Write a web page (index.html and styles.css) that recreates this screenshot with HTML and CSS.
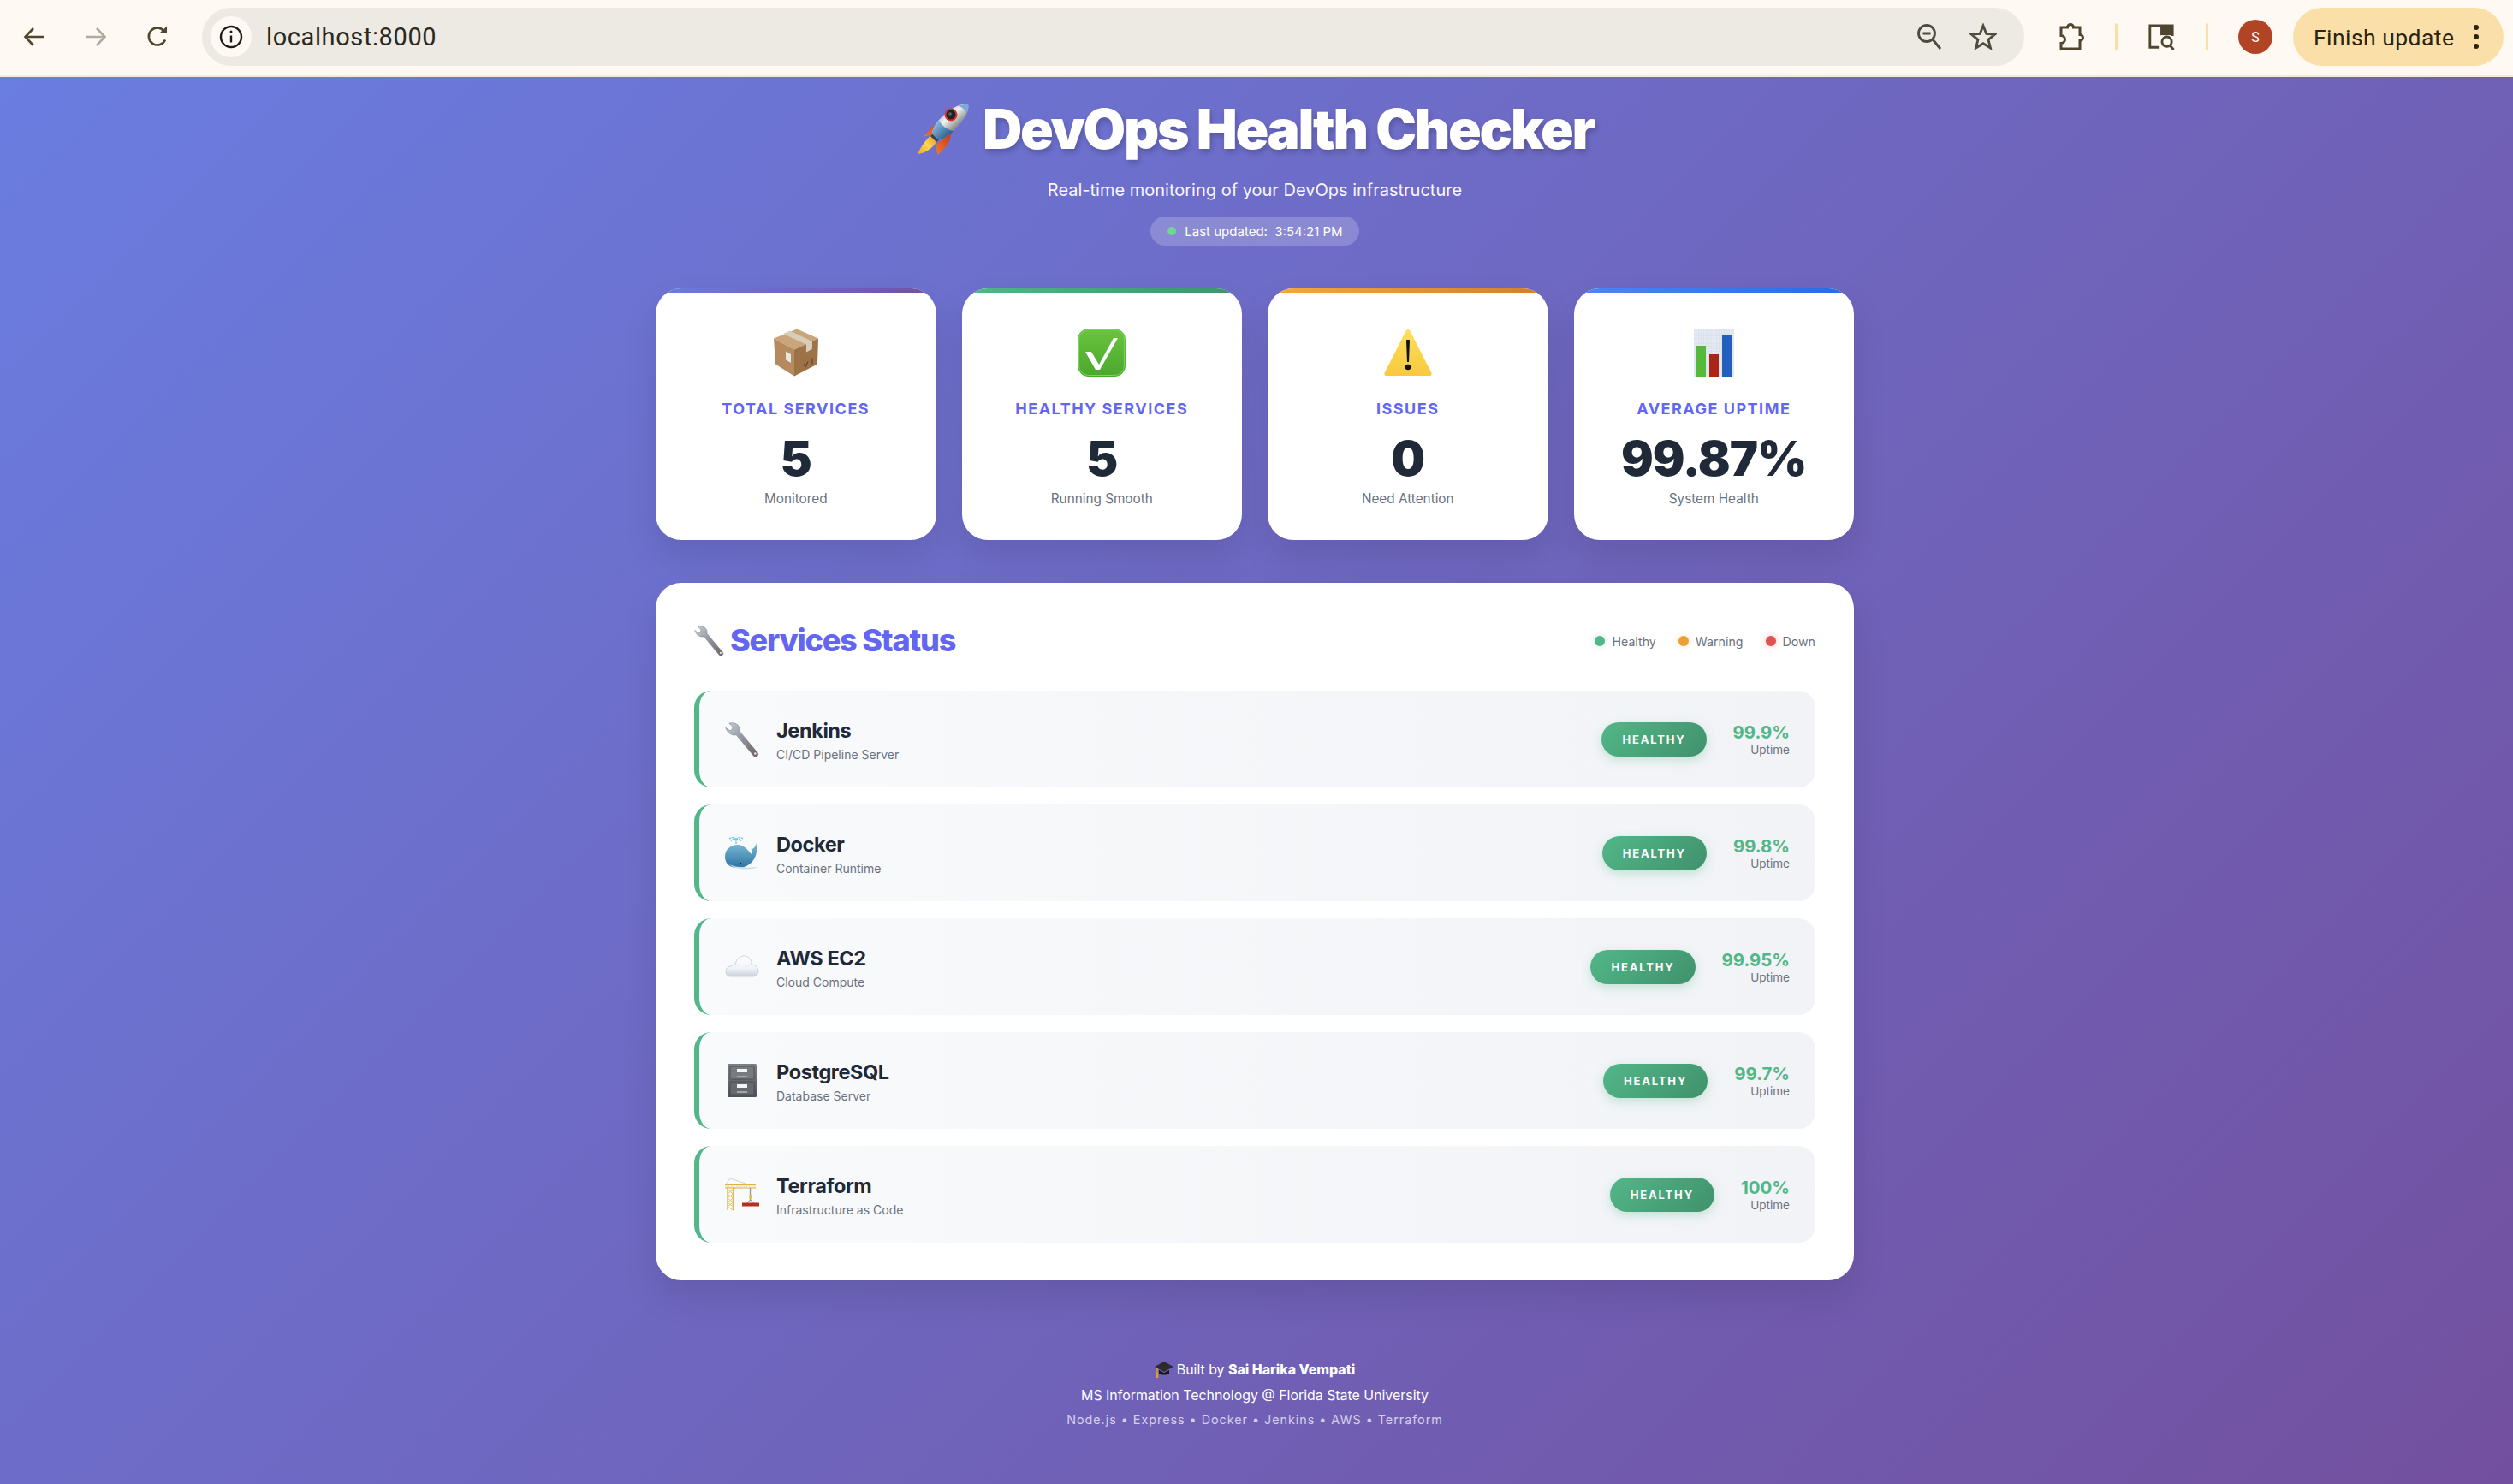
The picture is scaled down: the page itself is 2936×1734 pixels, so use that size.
FILE: index.html
```html
<!DOCTYPE html>
<html lang="en">
<head>
<meta charset="utf-8">
<title>DevOps Health Checker</title>
<link rel="stylesheet" href="styles.css">
</head>
<body>
<svg class="defs" width="0" height="0" aria-hidden="true">
  <defs>
    <linearGradient id="steel" x1="0" y1="0" x2="1" y2="1"><stop offset="0" stop-color="#c9cfd8"/><stop offset=".5" stop-color="#8f929c"/><stop offset="1" stop-color="#6d5f60"/></linearGradient>
    <linearGradient id="rocketBody" gradientUnits="userSpaceOnUse" x1="30" y1="8" x2="50" y2="30"><stop offset="0" stop-color="#a9b0b8"/><stop offset=".4" stop-color="#f0f2f3"/><stop offset="1" stop-color="#6f7276"/></linearGradient>
    <linearGradient id="rocketTail" gradientUnits="userSpaceOnUse" x1="22" y1="22" x2="38" y2="38"><stop offset="0" stop-color="#8fc0e6"/><stop offset="1" stop-color="#2c5f8e"/></linearGradient>
    <linearGradient id="finGrad" x1="1" y1="0" x2="0" y2="1"><stop offset="0" stop-color="#c8301e"/><stop offset="1" stop-color="#f07a2a"/></linearGradient>
    <linearGradient id="flame" x1="1" y1="0" x2="0" y2="1"><stop offset="0" stop-color="#e88a20"/><stop offset=".5" stop-color="#fbd84e"/><stop offset="1" stop-color="#f5a52a"/></linearGradient>
    <linearGradient id="checkBg" x1="0" y1="0" x2="0" y2="1"><stop offset="0" stop-color="#6ac43f"/><stop offset="1" stop-color="#4aa82e"/></linearGradient>
    <linearGradient id="warnBg" x1="0" y1="0" x2="0" y2="1"><stop offset="0" stop-color="#fbe05a"/><stop offset="1" stop-color="#f8c93f"/></linearGradient>
    <linearGradient id="whaleBg" x1="0" y1="0" x2="0" y2="1"><stop offset="0" stop-color="#7cbad6"/><stop offset="1" stop-color="#2f73a3"/></linearGradient>
    <linearGradient id="cloudBg" x1="0" y1="0" x2="0" y2="1"><stop offset="0" stop-color="#ffffff"/><stop offset=".6" stop-color="#f0f3f7"/><stop offset="1" stop-color="#c7d0db"/></linearGradient>
    <linearGradient id="cabinetBg" x1="0" y1="0" x2="0" y2="1"><stop offset="0" stop-color="#7c8085"/><stop offset="1" stop-color="#4f5358"/></linearGradient>
    <pattern id="chartGrid" width="3" height="3" patternUnits="userSpaceOnUse"><rect width="3" height="3" fill="#e4eaf1"/><path d="M3 0V3H0" fill="none" stroke="#c8d2de" stroke-width=".5"/></pattern>
    <symbol id="wrench" viewBox="0 0 40 40">
      <path d="M33.600 39.400 13 14.600c-1.100.4-3.300.6-5.300-.3C4 12.800 1.400 9.200.8 6.200 2.200 7.500 5 9.500 6.400 9.600c1.600-.5 2.800-2.400 2.700-4C8.100 4 6 2 4.800 1.200 8.200.1 12.400.8 14.800 3c2.300 2.200 2.900 5.200 2.400 7.700l21 24.900c.9 1.500.6 3-.6 3.900-1.400.9-3 .9-4-.1Z" fill="url(#steel)" stroke="#7f8088" stroke-width=".6"/>
      <circle cx="35.300" cy="36.500" r="1.300" fill="#e8e8ea"/>
    </symbol>
  </defs>
</svg>

<header class="browser-bar">
  <div class="nav-group">
    <svg class="tool-icon" viewBox="0 0 28 28"><path d="M25 14H4M13 4 3.500 14 13 24"/></svg>
    <svg class="tool-icon tool-muted" viewBox="0 0 28 28"><path d="M3 14h21M15 4l9.500 10L15 24"/></svg>
    <svg class="tool-icon" viewBox="0 0 28 28"><path d="M23 17.500A10 10 0 1 1 21 6.500"/><path class="fill" d="M16.500 9.500H25V1.500Z"/></svg>
  </div>
  <div class="address">
    <span class="site-chip">
      <svg class="info-icon" viewBox="0 0 28 28"><circle cx="14" cy="14" r="12"/><path d="M14 12.500v8"/><circle class="fill" cx="14" cy="8" r="1.500"/></svg>
    </span>
    <span class="url">localhost:8000</span>
    <svg class="addr-icon" viewBox="0 0 32 32"><circle cx="13" cy="12" r="9.500"/><path d="M8.500 12h9M20 19l9 11"/></svg>
    <svg class="addr-icon" viewBox="0 0 32 32"><path d="m16 3 3.700 9.300 10 .7-7.700 6.300 2.500 9.700L16 23.700 7.500 29 10 19.300 2.300 13l10-.7Z"/></svg>
  </div>
  <svg class="ext-icon" viewBox="0 0 32 32"><path d="M5 5h7.500a3.500 3.500 0 0 1 7 0H27v8.500a3.500 3.500 0 0 1 0 7V30H5v-6.500a4.500 4.500 0 0 0 0-9Z"/></svg>
  <span class="divider"></span>
  <svg class="ext-icon" viewBox="0 0 34 34"><path d="M14 30H3V3h28v13"/><path class="fill" d="M16 3h15v12H16Z"/><circle cx="24" cy="23" r="6"/><path d="m28 28 4.500 5"/></svg>
  <span class="divider"></span>
  <span class="avatar">S</span>
  <div class="update-pill">
    <span class="update-text">Finish update</span>
    <span class="kebab"><i></i><i></i><i></i></span>
  </div>
</header>

<main class="page">
  <section class="hero">
    <h1 class="title">
      <svg class="title-emoji" viewBox="0 0 62 60">
        <path d="M33 19 19 27 9 39c4-2 8-2 12-1l7-6Z" fill="url(#finGrad)"/>
        <path d="M42 33 38 47 26 60c-2-4-3-8-1-13l8-7Z" fill="url(#finGrad)"/>
        <path d="M19 36C12 42 6 50 2 59c8-1 16-5 22-14Z" fill="url(#flame)"/>
        <path d="M17 38 24 45 28 41 21 34Z" fill="#3b4150"/>
        <path d="M61 1C52-1 39 6 27 19 22 25 19 31 19 35l7 7c5 0 12-4 18-10C56 20 63 9 61 1Z" fill="url(#rocketBody)"/>
        <path d="M27 19C22 25 19 31 19 35l7 7c5 0 12-4 18-10 -7 -1 -14 -6 -17 -13Z" fill="url(#rocketTail)"/>
        <path d="M61 1c-3-.6-7 0-11 2 4 1 8 4 9 9 2-4 3-8 2-11Z" fill="#7fa8d8"/>
        <circle cx="41" cy="13" r="7.500" fill="#d8352a"/>
        <circle cx="41" cy="13" r="5.500" fill="#1e2128"/>
        <circle cx="40" cy="12" r="1.800" fill="#5d6470"/>
      </svg>
      <span>DevOps Health Checker</span>
    </h1>
    <p class="subtitle">Real-time monitoring of your DevOps infrastructure</p>
    <div class="updated"><span class="live-dot"></span><span>Last updated:&nbsp; 3:54:21 PM</span></div>
  </section>

  <section class="stats">
    <article class="stat stat-total">
      <svg class="stat-emoji" viewBox="0 0 52 55">
        <path d="M27 0 52 11 24 24 0 11Z" fill="#c9a57a"/>
        <path d="M0 11 24 24V55L2 41Z" fill="#b48a5e"/>
        <path d="M52 11 51 41 24 55V24Z" fill="#9c7246"/>
        <path d="M11 5.500 38 18l-.1 9 7-3.500.1-9L19 2Z" fill="#d9ccb8"/>
        <path d="M14 26l6 3.500v10l-6-3.500Z" fill="#e8e6e0"/>
        <path d="M35 41l2 3 3-6M45 34v7" fill="none" stroke="#5c452c" stroke-width="1.200"/>
      </svg>
      <h3 class="stat-label">TOTAL SERVICES</h3>
      <div class="stat-value">5</div>
      <p class="stat-note">Monitored</p>
    </article>
    <article class="stat stat-healthy">
      <svg class="stat-emoji" viewBox="0 0 56 56">
        <rect width="56" height="56" rx="13" fill="url(#checkBg)"/>
        <rect x="1.500" y="1.500" width="53" height="53" rx="11.500" fill="none" stroke="#7ed45a" stroke-width="1"/>
        <path d="M9 27h7l9 15L42 11h5L26 48h-5Z" fill="#fff"/>
      </svg>
      <h3 class="stat-label">HEALTHY SERVICES</h3>
      <div class="stat-value">5</div>
      <p class="stat-note">Running Smooth</p>
    </article>
    <article class="stat stat-issues">
      <svg class="stat-emoji" viewBox="0 0 56 56">
        <path d="M28 1c1 0 1.800.6 2.300 1.600l25 49c.8 1.800.1 3.400-2 3.400H2.700c-2.100 0-2.800-1.600-2-3.400l25-49C26.200 1.600 27 1 28 1Z" fill="url(#warnBg)"/>
        <path d="M26 13h4l-1 26h-2Z" fill="#111"/>
        <circle cx="28" cy="45" r="3.300" fill="#111"/>
      </svg>
      <h3 class="stat-label">ISSUES</h3>
      <div class="stat-value">0</div>
      <p class="stat-note">Need Attention</p>
    </article>
    <article class="stat stat-uptime">
      <svg class="stat-emoji" viewBox="0 0 47 56">
        <rect width="47" height="56" fill="url(#chartGrid)"/>
        <rect x="3" y="20" width="11" height="36" fill="#55b93a"/>
        <rect x="18" y="30" width="11" height="26" fill="#ad2417"/>
        <rect x="33" y="7" width="11" height="49" fill="#2360bd"/>
      </svg>
      <h3 class="stat-label">AVERAGE UPTIME</h3>
      <div class="stat-value">99.87%</div>
      <p class="stat-note">System Health</p>
    </article>
  </section>

  <section class="panel">
    <div class="panel-head">
      <h2 class="panel-title">
        <svg class="panel-emoji"><use href="#wrench"/></svg>
        <span>Services Status</span>
      </h2>
      <div class="legend">
        <span class="legend-item"><i class="dot dot-green"></i>Healthy</span>
        <span class="legend-item"><i class="dot dot-orange"></i>Warning</span>
        <span class="legend-item"><i class="dot dot-red"></i>Down</span>
      </div>
    </div>
    <div class="rows">
      <div class="row">
        <svg class="row-emoji"><use href="#wrench"/></svg>
        <div class="row-info"><div class="row-name">Jenkins</div><div class="row-desc">CI/CD Pipeline Server</div></div>
        <span class="badge">HEALTHY</span>
        <div class="uptime"><div class="uptime-value">99.9%</div><div class="uptime-label">Uptime</div></div>
      </div>
      <div class="row">
        <svg class="row-emoji" viewBox="0 0 40 40">
          <path d="M13 9V4M13 4C11 1 8 1 5 3M13 4c2-3 5-3 8-1M13 5C11 3 9 3 7 6M13 5c2-2 4-2 6 1" fill="none" stroke="#6fc8dc" stroke-width="1.400" stroke-dasharray="2.500 .8"/>
          <path d="M0 24C0 15 7 10 15 10 23 10 27 17 31 21 32 18 32 16 30 16 33 15 36 12 37 8 38 12 38 15 37 18 36 26 30 36 17 37 6 38 0 32 0 24Z" fill="url(#whaleBg)"/>
          <path d="M5 33c7 3.500 20 4 34 3-8 3.500-27 4-34-3Z" fill="#c9dfe9"/>
          <circle cx="18" cy="32" r="1.300" fill="#15263a"/>
        </svg>
        <div class="row-info"><div class="row-name">Docker</div><div class="row-desc">Container Runtime</div></div>
        <span class="badge">HEALTHY</span>
        <div class="uptime"><div class="uptime-value">99.8%</div><div class="uptime-label">Uptime</div></div>
      </div>
      <div class="row">
        <svg class="row-emoji" viewBox="0 0 40 40">
          <path d="M6 31C3 31 1 28 1 25c0-4 3-6 6-6 1-1 3-2 5-2 1-6 5-10 10-10 5 0 8 3 9 7 0 1 0 2-.5 3 5 0 8.500 3.500 8.500 8 0 3-3 6-6 6Z" fill="url(#cloudBg)" stroke="#c3ccd7" stroke-width=".8"/>
          <path d="M12 17c2 0 4 1 5 2M31 17c-2 0-4 1-5 3" fill="none" stroke="#dbe1e8" stroke-width=".8"/>
        </svg>
        <div class="row-info"><div class="row-name">AWS EC2</div><div class="row-desc">Cloud Compute</div></div>
        <span class="badge">HEALTHY</span>
        <div class="uptime"><div class="uptime-value">99.95%</div><div class="uptime-label">Uptime</div></div>
      </div>
      <div class="row">
        <svg class="row-emoji" viewBox="0 0 40 40">
          <rect x="3" y="0" width="34" height="39" rx="1.500" fill="url(#cabinetBg)"/>
          <rect x="6" y="3" width="28" height="15" rx="1" fill="#777b80" stroke="#3f4347" stroke-width=".7"/>
          <rect x="6" y="21" width="28" height="15" rx="1" fill="#66696e" stroke="#3f4347" stroke-width=".7"/>
          <rect x="14" y="6" width="12" height="4" fill="#f4f4f4"/>
          <rect x="14" y="24" width="12" height="4" fill="#f4f4f4"/>
          <path d="M14 14h12v2H14ZM14 32h12v2H14Z" fill="#a4a8ac"/>
        </svg>
        <div class="row-info"><div class="row-name">PostgreSQL</div><div class="row-desc">Database Server</div></div>
        <span class="badge">HEALTHY</span>
        <div class="uptime"><div class="uptime-value">99.7%</div><div class="uptime-label">Uptime</div></div>
      </div>
      <div class="row">
        <svg class="row-emoji" viewBox="0 0 40 40">
          <path d="M6 1 1 8M6 1l24 8" stroke="#cfc9b4" stroke-width=".8" fill="none"/>
          <path d="M3 38V11M9.500 38V11" stroke="#e0b84a" stroke-width="1.400"/>
          <path d="M3 14l6.500 5-6.500 5 6.500 5-6.500 5 6.500 4M9.500 14 3 19l6.500 5L3 29l6.500 5" fill="none" stroke="#e7c565" stroke-width="1"/>
          <path d="M0 8.500h36M0 12h36" stroke="#dcb040" stroke-width="1.100"/>
          <path d="M0 12l3-3.500 3 3.500 3-3.500 3 3.500 3-3.500 3 3.500 3-3.500 3 3.500 3-3.500 3 3.500 3-3.500 3 3.500" fill="none" stroke="#eacb72" stroke-width=".9"/>
          <path d="M29.500 12v14" stroke="#9a9a92" stroke-width="1.400"/>
          <rect x="28.500" y="20" width="2.400" height="5" fill="#e3bb3e"/>
          <path d="M29.700 26l-4 4M29.700 26l4 4" stroke="#555" stroke-width=".8"/>
          <rect x="20" y="29.500" width="20" height="4" fill="#b5301f"/>
        </svg>
        <div class="row-info"><div class="row-name">Terraform</div><div class="row-desc">Infrastructure as Code</div></div>
        <span class="badge">HEALTHY</span>
        <div class="uptime"><div class="uptime-value">100%</div><div class="uptime-label">Uptime</div></div>
      </div>
    </div>
  </section>

  <footer class="footer">
    <p class="foot-line"><svg class="cap-emoji" viewBox="0 0 22 22">
      <path d="M11 2 22 8 11 14 0 8Z" fill="#2b2b30"/>
      <path d="M5 12v4c2 2 10 2 12 0v-4l-6 3Z" fill="#17171a"/>
      <path d="M3 9v6" stroke="#e59b2b" stroke-width="1.500"/>
      <path d="M1.800 15h2.500v6H1.800Z" fill="#e59b2b"/>
    </svg>Built by <strong>Sai Harika Vempati</strong></p>
    <p class="foot-line">MS Information Technology @ Florida State University</p>
    <p class="foot-tech">Node.js • Express • Docker • Jenkins • AWS • Terraform</p>
  </footer>
</main>
</body>
</html>
```
FILE: styles.css
```css
* { box-sizing: border-box; }
html, body { height: 100%; }
body {
  margin: 0;
  display: flex;
  flex-direction: column;
  overflow: hidden;
  font-family: Inter, "Noto Sans", sans-serif;
  color: #1f2937;
}
.defs { position: absolute; }
h1, h2, h3, p { margin: 0; }

/* Browser toolbar */
.browser-bar {
  height: 90px;
  flex: none;
  display: flex;
  align-items: center;
  padding: 0 12px 2px 26px;
  background: #fef9f2;
  border-bottom: 2px solid #f6eadb;
}
.nav-group { display: flex; gap: 44px; margin-right: 38px; }
.tool-icon { width: 28px; height: 28px; fill: none; stroke: #50462f; stroke-width: 2.6; }
.tool-icon .fill { fill: #50462f; stroke: none; }
.tool-muted { stroke: #b0aba0; }
.address {
  width: 2129px;
  height: 68px;
  flex: none;
  display: flex;
  align-items: center;
  padding: 0 32px 0 10px;
  border-radius: 34px;
  background: #edeae4;
}
.site-chip {
  width: 48px;
  height: 48px;
  display: flex;
  align-items: center;
  justify-content: center;
  border-radius: 50%;
  background: #fef9f2;
}
.info-icon { width: 28px; height: 28px; fill: none; stroke: #1d1a14; stroke-width: 2.4; }
.info-icon .fill { fill: #1d1a14; stroke: none; }
.url {
  flex: 1;
  margin-left: 17px;
  font-family: Roboto, sans-serif;
  font-size: 29px;
  letter-spacing: .6px;
  color: #2b2820;
}
.addr-icon { width: 32px; height: 32px; margin-left: 31px; fill: none; stroke: #4f4a3e; stroke-width: 2.8; }
.ext-icon { width: 32px; height: 34px; flex: none; fill: none; stroke: #50462f; stroke-width: 3; }
.ext-icon .fill { fill: #50462f; stroke: none; }
.address + .ext-icon { margin-left: 38px; }
.divider { width: 3px; height: 32px; margin: 0 35px 0 36px; flex: none; border-radius: 2px; background: #f8dfa6; }
.avatar {
  width: 40px;
  height: 40px;
  flex: none;
  display: flex;
  align-items: center;
  justify-content: center;
  border-radius: 50%;
  background: #b14424;
  color: #fff;
  font-family: Roboto, sans-serif;
  font-size: 16px;
}
.update-pill {
  width: 246px;
  height: 68px;
  margin-left: 24px;
  flex: none;
  display: flex;
  align-items: center;
  justify-content: space-between;
  padding: 0 29px 0 24px;
  border-radius: 34px;
  background: #fae0a8;
}
.update-text { font-family: Roboto, sans-serif; font-size: 26.500px; letter-spacing: .45px; color: #2a2414; }
.kebab { display: flex; flex-direction: column; gap: 5px; }
.kebab i { width: 6px; height: 6px; border-radius: 50%; background: #2a2414; }

/* Page */
.page {
  flex: 1;
  min-height: 0;
  display: flex;
  flex-direction: column;
  align-items: center;
  padding-right: 4px;
  background: linear-gradient(135deg, #6a7de0 0%, #73509f 100%);
}
.hero { display: flex; flex-direction: column; align-items: center; padding-top: 22px; color: #fff; }
.title {
  display: flex;
  align-items: center;
  gap: 16px;
  font-size: 64px;
  line-height: 78px;
  font-weight: 900;
  letter-spacing: -2.300px;
  text-shadow: 2px 4px 6px rgba(0, 0, 0, .2);
}
.title-emoji { width: 62px; height: 60px; }
.subtitle { margin-top: 17px; font-size: 20px; line-height: 30px; opacity: .95; }
.updated {
  display: flex;
  align-items: center;
  gap: 10px;
  height: 34px;
  margin-top: 16px;
  padding: 0 19px 0 20px;
  border-radius: 17px;
  background: rgba(255, 255, 255, .2);
  font-size: 15px;
}
.live-dot { width: 10px; height: 10px; border-radius: 50%; background: #6fd694; }

.stats {
  width: 1400px;
  margin-top: 50px;
  display: grid;
  grid-template-columns: repeat(4, 1fr);
  gap: 30px;
}
.stat {
  position: relative;
  height: 294px;
  display: flex;
  flex-direction: column;
  align-items: center;
  padding-top: 47px;
  overflow: hidden;
  border-radius: 30px;
  background: #fff;
  box-shadow: 0 20px 40px rgba(0, 0, 0, .1);
}
.stat::before {
  content: "";
  position: absolute;
  inset: 0 0 auto;
  height: 5px;
  background: linear-gradient(90deg, #6a7de0, #73509f);
}
.stat-healthy::before { background: linear-gradient(90deg, #52b788, #40916c); }
.stat-issues::before { background: linear-gradient(90deg, #f4a93b, #cf7f2e); }
.stat-uptime::before { background: linear-gradient(90deg, #4f85f3, #2f66ea); }
.stat-emoji { height: 56px; flex: none; }
.stat-total .stat-emoji { width: 52px; }
.stat-healthy .stat-emoji { width: 56px; }
.stat-issues .stat-emoji { width: 56px; }
.stat-uptime .stat-emoji { width: 47px; }
.stat-label {
  margin-top: 27px;
  font-size: 18px;
  line-height: 22px;
  font-weight: 700;
  letter-spacing: 1.500px;
  color: #6366f1;
}
.stat-value { margin-top: 17px; font-size: 56px; line-height: 60px; font-weight: 900; letter-spacing: -1px; color: #1f2937; }
.stat-note { margin-top: 6px; font-size: 15.300px; line-height: 22px; color: #6b7280; }

.panel {
  width: 1400px;
  height: 815px;
  margin-top: 50px;
  padding: 45px;
  border-radius: 30px;
  background: #fff;
  box-shadow: 0 20px 40px rgba(0, 0, 0, .1);
}
.panel-head { display: flex; align-items: center; justify-content: space-between; height: 44px; margin-bottom: 37px; }
.panel-title { display: flex; align-items: center; gap: 7px; font-size: 36px; line-height: 44px; font-weight: 800; letter-spacing: -1.200px; color: #6366f1; }
.panel-emoji { width: 35px; height: 35px; }
.legend { display: flex; gap: 26px; padding-top: 2px; font-size: 14.200px; color: #6b7280; }
.legend-item { display: flex; align-items: center; gap: 8px; }
.dot { width: 12px; height: 12px; border-radius: 50%; }
.dot-green { background: #52b788; box-shadow: 0 0 8px rgba(82, 183, 136, .3); }
.dot-orange { background: #ed9f35; box-shadow: 0 0 8px rgba(237, 159, 53, .3); }
.dot-red { background: #e05252; box-shadow: 0 0 8px rgba(224, 82, 82, .4); }

.rows { display: flex; flex-direction: column; gap: 20px; }
.row {
  height: 113px;
  display: flex;
  align-items: center;
  padding: 0 30px;
  border-left: 6px solid #52b788;
  border-radius: 20px;
  background: linear-gradient(90deg, #f8fafc, #f1f3f6);
}
.row-emoji { width: 40px; height: 40px; flex: none; }
.row-info { flex: 1; margin-left: 20px; padding-top: 4px; }
.row-name { font-size: 23.500px; line-height: 28px; font-weight: 700; letter-spacing: -.4px; color: #1f2937; }
.row-desc { margin-top: 3px; font-size: 14px; line-height: 21px; color: #6b7280; }
.badge {
  height: 40px;
  display: flex;
  align-items: center;
  padding: 0 24px;
  border-radius: 20px;
  background: linear-gradient(135deg, #52b788, #40916c);
  box-shadow: 0 4px 12px rgba(82, 183, 136, .3);
  color: #fff;
  font-size: 13px;
  font-weight: 700;
  letter-spacing: 1.830px;
}
.uptime { margin-left: 31px; text-align: right; }
.uptime-value { padding-top: 2px; font-size: 20.400px; line-height: 24px; font-weight: 700; color: #52b788; }
.uptime-label { font-size: 13.500px; line-height: 17px; color: #6b7280; }

.footer { margin-top: 90px; display: flex; flex-direction: column; align-items: center; color: #fff; }
.foot-line { font-size: 15.900px; line-height: 30px; }
.foot-line strong { font-weight: 800; }
.cap-emoji { width: 22px; height: 22px; vertical-align: -5px; margin-right: 4px; }
.foot-tech { font-size: 14.300px; line-height: 26px; letter-spacing: 1px; opacity: .7; }
```
